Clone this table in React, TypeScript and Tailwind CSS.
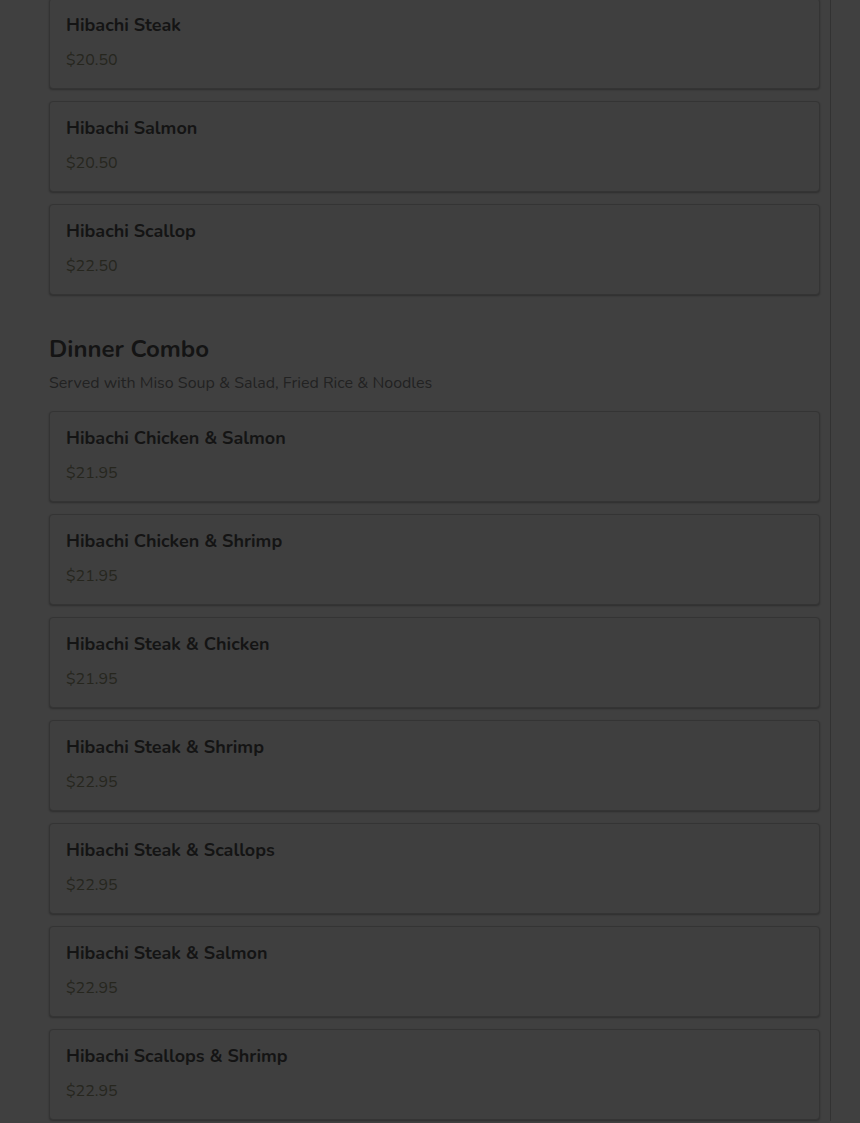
import React from 'react';

interface MenuItem {
  name: string;
  price: string;
}

const hibachi: MenuItem[] = [
  { name: 'Hibachi Steak', price: '$20.50' },
  { name: 'Hibachi Salmon', price: '$20.50' },
  { name: 'Hibachi Scallop', price: '$22.50' },
];

const combos: MenuItem[] = [
  { name: 'Hibachi Chicken & Salmon', price: '$21.95' },
  { name: 'Hibachi Chicken & Shrimp', price: '$21.95' },
  { name: 'Hibachi Steak & Chicken', price: '$21.95' },
  { name: 'Hibachi Steak & Shrimp', price: '$22.95' },
  { name: 'Hibachi Steak & Scallops', price: '$22.95' },
  { name: 'Hibachi Steak & Salmon', price: '$22.95' },
  { name: 'Hibachi Scallops & Shrimp', price: '$22.95' },
];

const ItemCard: React.FC<{ item: MenuItem }> = ({ item }) => (
  <div className="h-[91px] rounded-[4px] border border-[#343434] bg-[#3f3f3f] px-4 pt-[13px] shadow-[0_1px_2px_rgba(0,0,0,0.3)]">
    <div className="text-[18px] font-bold leading-[27px] text-[#141414]">{item.name}</div>
    <div className="mt-[9px] text-[16px] leading-[24px] text-[#26261e]">{item.price}</div>
  </div>
);

export default function App() {
  return (
    <div className="min-h-[1123px] w-[860px] overflow-hidden bg-[#404040]" style={{ fontFamily: '"Nunito", "Lato", "Noto Sans", sans-serif' }}>
      <div className="w-[831px] min-h-[1123px] border-r border-[#323232] pl-[49px] pr-[10px]">
        <div className="-mt-[2px] flex flex-col gap-[12px]">
          {hibachi.map((item) => (
            <ItemCard key={item.name} item={item} />
          ))}
        </div>

        <h2 className="mt-[36px] text-[24px] font-bold leading-[36px] text-[#141414]">Dinner Combo</h2>
        <p className="mt-[4px] text-[16px] leading-[24px] text-[#222222]">
          Served with Miso Soup &amp; Salad, Fried Rice &amp; Noodles
        </p>

        <div className="mt-[16px] flex flex-col gap-[12px]">
          {combos.map((item) => (
            <ItemCard key={item.name} item={item} />
          ))}
        </div>
      </div>
    </div>
  );
}
